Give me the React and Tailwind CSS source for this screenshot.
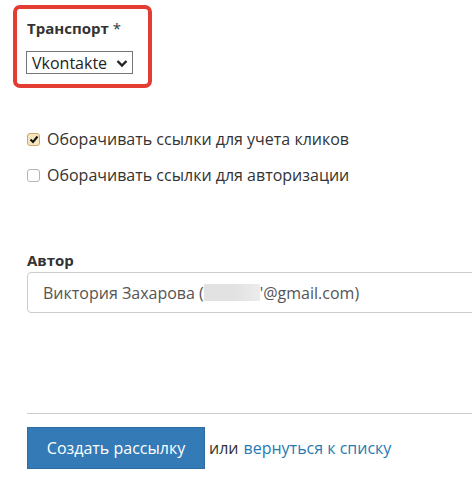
import React from "react";

export default function App() {
  const font = { fontFamily: '"Open Sans", "Liberation Sans", sans-serif' };
  return (
    <div className="w-[472px] h-[501px] bg-white overflow-hidden text-[#333]" style={font}>
      <div className="pt-[5px] pl-[13px]">
        <div className="w-[139px] h-[83px] border-4 border-[#e23c33] rounded-[7px] pl-[10px] pt-[9px]">
          <div className="text-[15px] font-bold leading-[20px] text-[#333]">
            Транспорт <span className="font-normal">*</span>
          </div>
          <div className="mt-[13px] ml-[-1px] w-[107px] h-[23px] border border-[#767676] flex items-center pl-[5px] pr-[4px] justify-between">
            <span className="text-[16px] leading-[20px] text-[#222]">Vkontakte</span>
            <svg width="12" height="9" viewBox="0 0 12 9" className="mt-[2px]">
              <path d="M1.5 2 L6 6.5 L10.5 2" fill="none" stroke="#222" strokeWidth="2.4" />
            </svg>
          </div>
        </div>
      </div>

      <div className="pl-[27px] mt-[40px]">
        <label className="flex items-center h-[22px]">
          <span className="w-[13px] h-[13px] rounded-[3px] border border-[#c8a86a] bg-[#f6e5bd] flex items-center justify-center">
            <svg width="10" height="9" viewBox="0 0 10 9">
              <path d="M1.5 4.5 L4 7 L8.5 1.5" fill="none" stroke="#111" strokeWidth="2" />
            </svg>
          </span>
          <span className="ml-[7px] text-[16px] leading-[22px]">Оборачивать ссылки для учета кликов</span>
        </label>
        <label className="flex items-center h-[22px] mt-[14px]">
          <span className="w-[13px] h-[13px] rounded-[3px] border border-[#b5b5b5] bg-white" />
          <span className="ml-[7px] text-[16px] leading-[22px]">Оборачивать ссылки для авторизации</span>
        </label>

        <div className="mt-[64px] text-[15px] font-bold leading-[20px]">Автор</div>
        <div className="mt-[2px] h-[41px] w-[460px] border border-[#ccc] rounded-[4px] flex items-center pl-[15px] text-[16px] text-[#555]">
          <span>Виктория Захарова (</span>
          <span className="inline-block w-[56px] h-[17px] bg-[linear-gradient(to_right,#e2e2e2_0%,#e2e2e2_55%,#ececec_100%)]" />
          <span>'@gmail.com)</span>
        </div>

        <div className="mt-[100px] h-px w-[460px] bg-[#ccc]" />

        <div className="mt-[13px] flex items-center">
          <button className="w-[178px] h-[42px] bg-[#337ab7] border border-[#2e6da4] text-white text-[16px]">
            Создать рассылку
          </button>
          <span className="ml-[4px] text-[16px]">или </span>
          <a className="ml-[5px] text-[16px] text-[#2a7ab0]">вернуться к списку</a>
        </div>
      </div>
    </div>
  );
}
